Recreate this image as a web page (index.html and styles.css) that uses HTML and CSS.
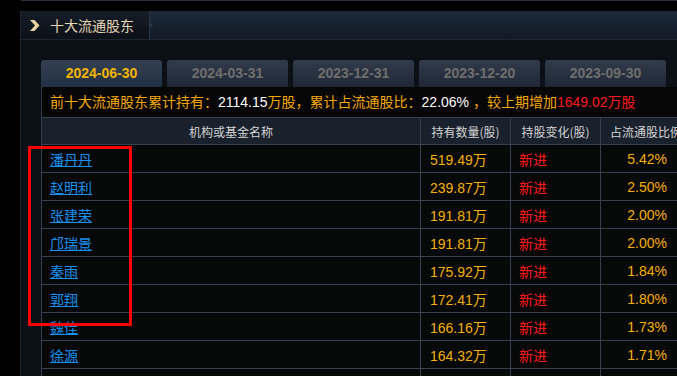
FILE: index.html
```html
<!DOCTYPE html>
<html lang="zh-CN">
<head>
<meta charset="utf-8">
<title>十大流通股东</title>
<link rel="stylesheet" href="styles.css">
</head>
<body>
<div class="topline"></div>
<section class="panel">
  <header class="panel-head">
    <div class="title-tab">
      <svg class="chev" width="10" height="11" viewBox="0 0 10 11"><polygon points="0,0 4.5,0 9.5,5.5 4.5,11 0,11 5,5.5" fill="#e9d3a6"/></svg>
      <span class="title">十大流通股东</span>
    </div>
    <div class="head-fill"></div>
  </header>
  <div class="panel-body">
    <nav class="tabs">
      <div class="tab active">2024-06-30</div>
      <div class="tab">2024-03-31</div>
      <div class="tab">2023-12-31</div>
      <div class="tab">2023-12-20</div>
      <div class="tab">2023-09-30</div>
    </nav>
    <div class="summary">前十大流通股东累计持有：<span class="w">2114.15</span>万股，累计占流通股比：<span class="w">22.06%</span> ，较上期增加<span class="r">1649.02万股</span></div>
    <table class="grid">
      <colgroup><col class="c1"><col class="c2"><col class="c3"><col class="c4"></colgroup>
      <thead>
        <tr><th>机构或基金名称</th><th>持有数量(股)</th><th>持股变化(股)</th><th>占流通股比例</th></tr>
      </thead>
      <tbody>
        <tr><td class="name"><a href="#">潘丹丹</a></td><td class="num">519.49万</td><td class="chg">新进</td><td class="pct">5.42%</td></tr>
        <tr><td class="name"><a href="#">赵明利</a></td><td class="num">239.87万</td><td class="chg">新进</td><td class="pct">2.50%</td></tr>
        <tr><td class="name"><a href="#">张建荣</a></td><td class="num">191.81万</td><td class="chg">新进</td><td class="pct">2.00%</td></tr>
        <tr><td class="name"><a href="#">邝瑞景</a></td><td class="num">191.81万</td><td class="chg">新进</td><td class="pct">2.00%</td></tr>
        <tr><td class="name"><a href="#">秦雨</a></td><td class="num">175.92万</td><td class="chg">新进</td><td class="pct">1.84%</td></tr>
        <tr><td class="name"><a href="#">郭翔</a></td><td class="num">172.41万</td><td class="chg">新进</td><td class="pct">1.80%</td></tr>
        <tr><td class="name"><a href="#">魏佳</a></td><td class="num">166.16万</td><td class="chg">新进</td><td class="pct">1.73%</td></tr>
        <tr><td class="name"><a href="#">徐源</a></td><td class="num">164.32万</td><td class="chg">新进</td><td class="pct">1.71%</td></tr>
        <tr><td class="name"><a href="#">&nbsp;</a></td><td class="num"></td><td class="chg"></td><td class="pct"></td></tr>
      </tbody>
    </table>
  </div>
</section>
<div class="mark"></div>
</body>
</html>
```
FILE: styles.css
```css
html, body {
  margin: 0;
  padding: 0;
  background: #000;
  overflow: hidden;
}
body {
  width: 677px;
  height: 376px;
  font-family: "Liberation Sans", "Noto Sans CJK SC", sans-serif;
  position: relative;
}
.topline {
  height: 1px;
  margin-left: 21px;
  background: #27303c;
}
.panel {
  margin: 10px 0 0 20px;
  border-left: 1px solid #1d242e;
  background: #0b0f16;
  height: 400px;
}
.panel-head {
  display: flex;
  height: 28px;
  border-bottom: 1px solid #1c2530;
}
.title-tab {
  position: relative;
  width: 128px;
  display: flex;
  align-items: center;
  background: linear-gradient(#161d27, #0c1118);
  border-right: 1px solid #2b3541;
}
.title-tab::after {
  content: "";
  position: absolute;
  right: -4px;
  top: 11px;
  border-left: 3px solid #2b3541;
  border-top: 3px solid transparent;
  border-bottom: 3px solid transparent;
}
.chev {
  margin-left: 9px;
  display: block;
}
.title {
  margin-left: 10px;
  font-family: "Noto Sans CJK SC", sans-serif;
  font-size: 14px;
  color: #e6d6b6;
  letter-spacing: 0;
}
.head-fill {
  flex: 1;
  background: linear-gradient(#1c2a3b, #121b27);
}
.panel-body {
  padding: 20px 0 0 20px;
}
.tabs {
  display: flex;
  gap: 5px;
  height: 27px;
}
.tab {
  width: 121px;
  flex: none;
  border-radius: 3px 3px 0 0;
  background: linear-gradient(#313b4b, #1f2735);
  color: #6e6e6e;
  font-weight: bold;
  font-size: 14px;
  text-align: center;
  line-height: 27px;
}
.tab.active {
  color: #f4b400;
  background: linear-gradient(#344052, #223044);
}
.summary {
  height: 30px;
  line-height: 30px;
  background: #060606;
  border-left: 1px solid #2f3a48;
  padding-left: 8px;
  font-size: 14px;
  color: #f5a800;
  white-space: nowrap;
  font-family: "Liberation Sans", "Noto Sans CJK SC", sans-serif;
}
.summary .w { color: #ffffff; }
.summary .r { color: #ff1a1a; }
.grid {
  border-collapse: collapse;
  table-layout: fixed;
  width: 650px;
  background: #070808;
}
.c1 { width: 379px; }
.c2 { width: 90px; }
.c3 { width: 90px; }
.c4 { width: 91px; }
.grid th, .grid td {
  border: 1px solid #363f4c;
  padding: 0;
  white-space: nowrap;
  overflow: hidden;
}
.grid th {
  height: 26px;
  background: #19212d;
  color: #d4d4d4;
  font-weight: normal;
  font-size: 12px;
  font-family: "Noto Sans CJK SC", sans-serif;
  text-align: center;
}
.grid th:last-child {
  text-align: left;
  padding-left: 9px;
}
.grid td {
  height: 27px;
  font-size: 14px;
}
.name { padding-left: 8px !important; }
.name a {
  color: #1a90f0;
  text-decoration: underline;
  font-family: "Noto Sans CJK SC", sans-serif;
}
.num {
  color: #f5b000;
  padding-left: 9px !important;
}
.chg {
  color: #ff1a1a;
  padding-left: 8px !important;
  font-family: "Noto Sans CJK SC", sans-serif;
}
.pct {
  color: #f5b000;
  text-align: right;
  padding-right: 24px !important;
}
.mark {
  position: absolute;
  left: 28px;
  top: 146px;
  width: 98px;
  height: 174px;
  border: 3px solid #ff0000;
}
```
